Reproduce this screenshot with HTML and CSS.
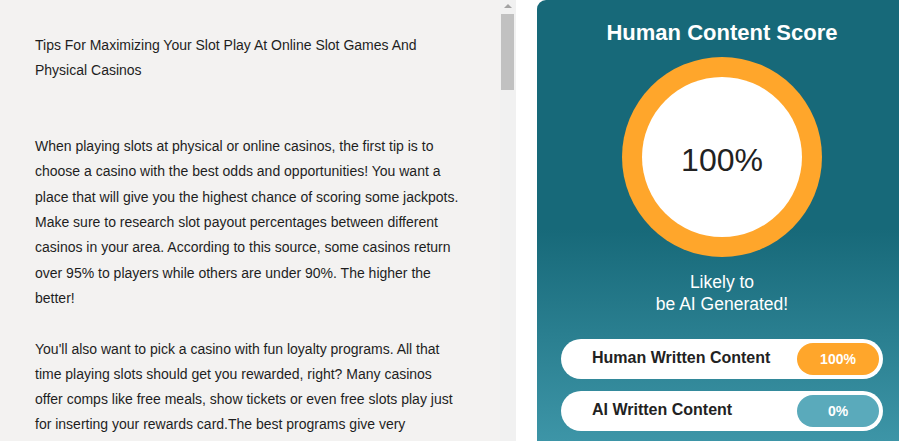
FILE: index.html
```html
<!DOCTYPE html>
<html lang="en">
<head>
<meta charset="utf-8">
<title>Human Content Score</title>
<link rel="stylesheet" href="styles.css">
</head>
<body>
<div class="page">
  <section class="editor">
    <div class="editor-text">
      <p class="title">Tips For Maximizing Your Slot Play At Online Slot Games And Physical Casinos</p>
      <p>When playing slots at physical or online casinos, the first tip is to choose a casino with the best odds and opportunities! You want a place that will give you the highest chance of scoring some jackpots. Make sure to research slot payout percentages between different casinos in your area. According to this source, some casinos return over 95% to players while others are under 90%. The higher the better!</p>
      <p>You'll also want to pick a casino with fun loyalty programs. All that time playing slots should get you rewarded, right? Many casinos offer comps like free meals, show tickets or even free slots play just for inserting your rewards card.The best programs give very extraordinary rewards the more you play.</p>
    </div>
    <div class="scrollbar">
      <div class="scroll-arrow"></div>
      <div class="scroll-thumb"></div>
    </div>
  </section>
  <aside class="score-panel">
    <h2 class="score-title">Human Content Score</h2>
    <div class="ring">
      <div class="ring-inner">100%</div>
    </div>
    <p class="verdict">Likely to<br>be AI Generated!</p>
    <div class="stat">
      <span class="stat-label">Human Written Content</span>
      <span class="badge badge-human">100%</span>
    </div>
    <div class="stat">
      <span class="stat-label">AI Written Content</span>
      <span class="badge badge-ai">0%</span>
    </div>
  </aside>
</div>
</body>
</html>
```

FILE: styles.css
```css
html, body {
  margin: 0;
  padding: 0;
  background: #ffffff;
}

.page {
  display: flex;
  gap: 21px;
  height: 441px;
  width: 899px;
  overflow: hidden;
  font-family: "Liberation Sans", Arial, sans-serif;
}

.editor {
  display: flex;
  flex-shrink: 0;
  width: 516px;
  height: 441px;
  background: #f3f2f1;
}

.editor-text {
  width: 500px;
  box-sizing: border-box;
  padding: 33px 37px 0 35px;
  font-size: 14px;
  line-height: 25.3px;
  color: #1e1e1e;
  overflow: hidden;
}

.editor-text p {
  margin: 0 0 25.3px 0;
}

.editor-text .title {
  margin-bottom: 50.6px;
}

.scrollbar {
  width: 16px;
  flex-shrink: 0;
  background: #f1f1f1;
  padding-top: 4px;
  box-sizing: border-box;
}

.scroll-arrow {
  width: 0;
  height: 0;
  margin: 0 auto;
  border-left: 4px solid transparent;
  border-right: 4px solid transparent;
  border-bottom: 4px solid #a3a3a3;
}

.scroll-thumb {
  width: 13px;
  height: 76px;
  margin: 6px 0 0 1px;
  background: #c1c1c1;
}

.score-panel {
  flex-shrink: 0;
  width: 370px;
  height: 441px;
  box-sizing: border-box;
  padding: 20px 24px 0 24px;
  border-radius: 9px 9px 0 0;
  background: linear-gradient(180deg, #176979 0%, #176979 52%, #3d95a7 100%);
  display: flex;
  flex-direction: column;
  align-items: center;
}

.score-title {
  margin: 0;
  font-size: 22px;
  line-height: 26px;
  font-weight: 700;
  color: #ffffff;
}

.ring {
  margin-top: 11px;
  width: 200px;
  height: 200px;
  border-radius: 50%;
  background: #ffa62b;
  display: flex;
  align-items: center;
  justify-content: center;
}

.ring-inner {
  width: 160px;
  height: 160px;
  border-radius: 50%;
  background: #ffffff;
  display: flex;
  align-items: center;
  justify-content: center;
  font-size: 32px;
  color: #222222;
  padding-top: 7px;
  box-sizing: border-box;
}

.verdict {
  margin: 14px 0 0 0;
  font-size: 17.5px;
  line-height: 22px;
  color: #ffffff;
  text-align: center;
}

.stat {
  align-self: stretch;
  margin-top: 12px;
  height: 40px;
  box-sizing: border-box;
  padding: 4px 4px 4px 31px;
  background: #ffffff;
  border-radius: 20px;
  display: flex;
  align-items: center;
  justify-content: space-between;
}

.verdict + .stat {
  margin-top: 24px;
}

.stat-label {
  font-size: 16px;
  font-weight: 700;
  color: #222222;
  padding-bottom: 2px;
}

.badge {
  width: 82px;
  height: 32px;
  border-radius: 16px;
  display: flex;
  align-items: center;
  justify-content: center;
  font-size: 14px;
  font-weight: 700;
  color: #ffffff;
}

.badge-human {
  background: #ffa62b;
}

.badge-ai {
  background: #5aaabb;
}
```
